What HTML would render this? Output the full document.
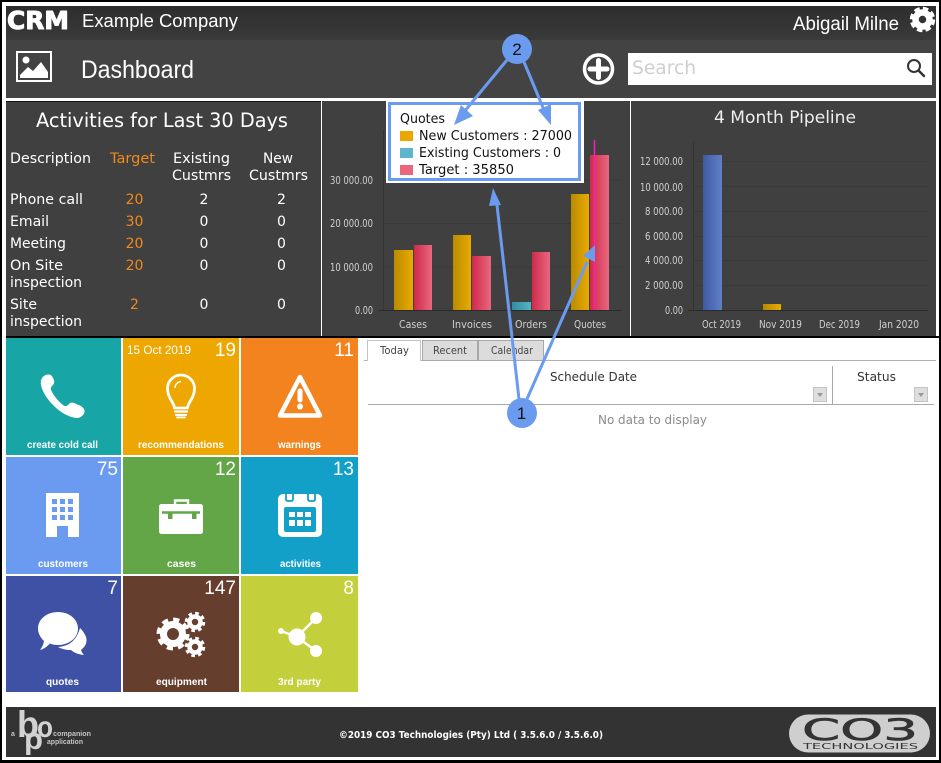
<!DOCTYPE html>
<html lang="en"><head><meta charset="utf-8"><title>Dashboard</title>
<style>
html,body{margin:0;padding:0;background:#fff;width:941px;height:763px;overflow:hidden}
svg{display:block}
.d{font-family:"DejaVu Sans",sans-serif}
.l{font-family:"Liberation Sans",sans-serif}
</style></head><body>
<svg width="941" height="763" viewBox="0 0 941 763" xmlns="http://www.w3.org/2000/svg">
<defs>
<linearGradient id="hd" x1="0" y1="0" x2="0" y2="1"><stop offset="0" stop-color="#2d2d2d"/><stop offset="1" stop-color="#3a3a3a"/></linearGradient>
<linearGradient id="go" x1="0" y1="0" x2="1" y2="0"><stop offset="0" stop-color="#b98b00"/><stop offset="1" stop-color="#e9aa00"/></linearGradient>
<linearGradient id="re" x1="0" y1="0" x2="1" y2="0"><stop offset="0" stop-color="#cf2a4c"/><stop offset="1" stop-color="#e8687e"/></linearGradient>
<linearGradient id="te" x1="0" y1="0" x2="1" y2="0"><stop offset="0" stop-color="#2f8ea2"/><stop offset="1" stop-color="#55b3c8"/></linearGradient>
<linearGradient id="bl" x1="0" y1="0" x2="1" y2="0"><stop offset="0" stop-color="#3f5aa2"/><stop offset="1" stop-color="#6080c8"/></linearGradient>
</defs>
<rect width="941" height="763" fill="#000"/>
<rect x="2" y="2" width="937" height="758" fill="#fff"/>

<!-- header -->
<rect x="6" y="6" width="930" height="34" fill="url(#hd)"/>
<rect x="6" y="40" width="930" height="58" fill="#434343"/>
<text class="d" x="7" y="29" font-size="25" font-weight="700" fill="#fff" stroke="#fff" stroke-width="1" stroke-linejoin="round" textLength="62" lengthAdjust="spacingAndGlyphs">CRM</text>
<text class="l" x="82" y="27" font-size="18" fill="#fff" textLength="156" lengthAdjust="spacingAndGlyphs">Example Company</text>
<text class="l" x="793" y="30" font-size="19" fill="#fff" textLength="106" lengthAdjust="spacingAndGlyphs">Abigail Milne</text>
<g fill="none" stroke="#fff"><circle cx="922.500" cy="19.500" r="7" stroke-width="6.500"/><circle cx="922.500" cy="19.500" r="10.500" stroke-width="4.500" stroke-dasharray="5.200 3.050"/></g>
<rect x="17" y="52" width="34" height="29" fill="none" stroke="#fff" stroke-width="2"/>
<circle cx="26" cy="60" r="3.500" fill="#fff"/>
<path d="M20 78 L20 75 L28 67 L33 71 L41 62 L48 72 L48 78Z" fill="#fff"/>
<text class="l" x="81" y="78" font-size="25" fill="#fff" textLength="113" lengthAdjust="spacingAndGlyphs">Dashboard</text>
<circle cx="598.500" cy="69" r="14" fill="none" stroke="#fff" stroke-width="3.500"/>
<path d="M590 69H607M598.500 60.500V77.500" stroke="#fff" stroke-width="5" stroke-linecap="round"/>
<rect x="628" y="53" width="304" height="32" fill="#fff"/>
<text class="d" x="632" y="74" font-size="19" fill="#cfcfcf" textLength="64" lengthAdjust="spacingAndGlyphs">Search</text>
<circle cx="914" cy="66" r="6" fill="none" stroke="#333" stroke-width="2"/>
<path d="M918.500 70.500L924 76" stroke="#333" stroke-width="2.500" stroke-linecap="round"/>

<!-- panels -->
<rect x="2" y="98" width="937" height="3" fill="#fff"/>
<rect x="6" y="101" width="315" height="235" fill="#404040"/>
<rect x="6" y="101" width="315" height="1" fill="#111"/>
<rect x="322" y="101" width="308" height="235" fill="#404040"/>
<rect x="631" y="101" width="305" height="235" fill="#404040"/>
<rect x="6" y="336" width="933" height="2" fill="#000"/>
<rect x="936" y="336" width="5" height="2" fill="#000"/>

<!-- activities table -->
<g class="d" fill="#fff" font-size="14">
<text x="36" y="127" font-size="19.500" textLength="252" lengthAdjust="spacingAndGlyphs">Activities for Last 30 Days</text>
<text x="10" y="163" textLength="81" lengthAdjust="spacingAndGlyphs">Description</text>
<text x="110" y="163" fill="#f08a1c" textLength="45" lengthAdjust="spacingAndGlyphs">Target</text>
<text x="173" y="163" textLength="57" lengthAdjust="spacingAndGlyphs">Existing</text>
<text x="172" y="180" textLength="59" lengthAdjust="spacingAndGlyphs">Custmrs</text>
<text x="263" y="163" textLength="30" lengthAdjust="spacingAndGlyphs">New</text>
<text x="249" y="180" textLength="59" lengthAdjust="spacingAndGlyphs">Custmrs</text>
<text x="10" y="204" textLength="73" lengthAdjust="spacingAndGlyphs">Phone call</text>
<text x="10" y="226" textLength="39" lengthAdjust="spacingAndGlyphs">Email</text>
<text x="10" y="248" textLength="56" lengthAdjust="spacingAndGlyphs">Meeting</text>
<text x="10" y="270" textLength="53" lengthAdjust="spacingAndGlyphs">On Site</text>
<text x="10" y="287" textLength="72" lengthAdjust="spacingAndGlyphs">inspection</text>
<text x="10" y="309" textLength="27" lengthAdjust="spacingAndGlyphs">Site</text>
<text x="10" y="326" textLength="72" lengthAdjust="spacingAndGlyphs">inspection</text>
<g fill="#f08a1c" text-anchor="middle"><text x="134.500" y="204">20</text><text x="134.500" y="226">30</text><text x="134.500" y="248">20</text><text x="134.500" y="270">20</text><text x="134.500" y="309">2</text></g>
<g text-anchor="middle"><text x="204" y="204">2</text><text x="204" y="226">0</text><text x="204" y="248">0</text><text x="204" y="270">0</text><text x="204" y="309">0</text>
<text x="281.500" y="204">2</text><text x="281.500" y="226">0</text><text x="281.500" y="248">0</text><text x="281.500" y="270">0</text><text x="281.500" y="309">0</text></g>
</g>

<!-- chart 1 -->
<g stroke="#3a3a3a" stroke-width="1"><path d="M384 180H622M384 223.500H622M384 267H622"/></g>
<path d="M383.500 130V310" stroke="#333"/>
<path d="M378 310.500H622" stroke="#2a2a2a"/>
<rect x="394" y="250" width="19" height="60" fill="url(#go)"/>
<rect x="414" y="245" width="18" height="65" fill="url(#re)"/>
<rect x="453" y="235" width="18" height="75" fill="url(#go)"/>
<rect x="472" y="256" width="19" height="54" fill="url(#re)"/>
<rect x="512" y="302" width="19" height="8" fill="url(#te)"/>
<rect x="532" y="252" width="18" height="58" fill="url(#re)"/>
<rect x="571" y="194" width="18" height="116" fill="url(#go)"/>
<rect x="590" y="155" width="19" height="155" fill="url(#re)"/>
<path d="M594.500 140V310" stroke="#ff1fb4" stroke-width="1.500"/>
<g class="d" font-size="11" fill="#d0d0d0">
<text x="330" y="184" textLength="43" lengthAdjust="spacingAndGlyphs">30 000.00</text>
<text x="330" y="227" textLength="43" lengthAdjust="spacingAndGlyphs">20 000.00</text>
<text x="330" y="271" textLength="43" lengthAdjust="spacingAndGlyphs">10 000.00</text>
<text x="355" y="314" textLength="18" lengthAdjust="spacingAndGlyphs">0.00</text>
<text x="399" y="328" textLength="28" lengthAdjust="spacingAndGlyphs">Cases</text>
<text x="452" y="328" textLength="40" lengthAdjust="spacingAndGlyphs">Invoices</text>
<text x="515" y="328" textLength="32" lengthAdjust="spacingAndGlyphs">Orders</text>
<text x="574" y="328" textLength="32" lengthAdjust="spacingAndGlyphs">Quotes</text>
</g>

<!-- chart 2 -->
<text class="d" x="714" y="123" font-size="16.500" fill="#eee" textLength="142" lengthAdjust="spacingAndGlyphs">4 Month Pipeline</text>
<g stroke="#3a3a3a"><path d="M693 161.500H928M693 186.500H928M693 211.500H928M693 236.500H928M693 260.500H928M693 285.500H928"/></g>
<path d="M693.500 142V310" stroke="#333"/>
<path d="M688 310.500H928" stroke="#2a2a2a"/>
<rect x="703" y="155" width="19" height="155" fill="url(#bl)"/>
<rect x="763" y="304" width="18" height="6" fill="url(#go)"/>
<g class="d" font-size="11" fill="#d0d0d0">
<text x="640" y="165" textLength="43" lengthAdjust="spacingAndGlyphs">12 000.00</text>
<text x="640" y="191" textLength="43" lengthAdjust="spacingAndGlyphs">10 000.00</text>
<text x="645" y="215" textLength="38" lengthAdjust="spacingAndGlyphs">8 000.00</text>
<text x="645" y="240" textLength="38" lengthAdjust="spacingAndGlyphs">6 000.00</text>
<text x="645" y="264" textLength="38" lengthAdjust="spacingAndGlyphs">4 000.00</text>
<text x="645" y="289" textLength="38" lengthAdjust="spacingAndGlyphs">2 000.00</text>
<text x="665" y="314" textLength="18" lengthAdjust="spacingAndGlyphs">0.00</text>
<text x="702" y="328" textLength="39" lengthAdjust="spacingAndGlyphs">Oct 2019</text>
<text x="759" y="328" textLength="43" lengthAdjust="spacingAndGlyphs">Nov 2019</text>
<text x="819" y="328" textLength="41" lengthAdjust="spacingAndGlyphs">Dec 2019</text>
<text x="879" y="328" textLength="40" lengthAdjust="spacingAndGlyphs">Jan 2020</text>
</g>

<!-- tiles -->
<rect x="6" y="338" width="115" height="117" fill="#17a5a5"/>
<rect x="123" y="338" width="116" height="117" fill="#eea700"/>
<rect x="241" y="338" width="117" height="117" fill="#f2831f"/>
<rect x="6" y="457" width="115" height="117" fill="#6a9bf0"/>
<rect x="123" y="457" width="116" height="117" fill="#62a648"/>
<rect x="241" y="457" width="117" height="117" fill="#12a0c8"/>
<rect x="6" y="576" width="115" height="116" fill="#3f51a5"/>
<rect x="123" y="576" width="116" height="116" fill="#653e2d"/>
<rect x="241" y="576" width="117" height="116" fill="#c4d03b"/>
<g class="l" fill="#fff">
<g font-size="19" text-anchor="end"><text x="236" y="356">19</text><text x="354" y="356">11</text><text x="118" y="475">75</text><text x="236" y="475">12</text><text x="354" y="475">13</text><text x="118" y="594">7</text><text x="236" y="594">147</text><text x="354" y="594">8</text></g>
<text x="127" y="354" font-size="12" textLength="64" lengthAdjust="spacingAndGlyphs">15 Oct 2019</text>
<g font-size="10.500" font-weight="700">
<text x="27" y="448" textLength="71" lengthAdjust="spacingAndGlyphs">create cold call</text>
<text x="138" y="448" textLength="86" lengthAdjust="spacingAndGlyphs">recommendations</text>
<text x="278" y="448" textLength="43" lengthAdjust="spacingAndGlyphs">warnings</text>
<text x="38" y="567" textLength="50" lengthAdjust="spacingAndGlyphs">customers</text>
<text x="167" y="567" textLength="29" lengthAdjust="spacingAndGlyphs">cases</text>
<text x="280" y="567" textLength="41" lengthAdjust="spacingAndGlyphs">activities</text>
<text x="46" y="685" textLength="33" lengthAdjust="spacingAndGlyphs">quotes</text>
<text x="156" y="685" textLength="51" lengthAdjust="spacingAndGlyphs">equipment</text>
<text x="278" y="685" textLength="43" lengthAdjust="spacingAndGlyphs">3rd party</text>
</g></g>

<!-- phone -->
<path d="M48 374.500C43 375 40 379 41 385C43 397 60 416 76 418C81 418.500 85 414 84.500 411C84.500 409 83 407.500 81 406L74 403C71.500 402 69.500 403 68 405C66.500 406.500 65 406.500 63 405C58 401 54 396 51 390C50.500 388 51 387 52.500 385.500C54 384 54.500 382 54 380L52 376C51 374.800 49.500 374.300 48 374.500Z" fill="#fff"/>
<!-- bulb -->
<path d="M174.500 408C174 402 167.500 398 167.500 388.500A13.500 13.500 0 0 1 194.500 388.500C194.500 398 188 402 187.500 408Z" fill="none" stroke="#fff" stroke-width="2.800" stroke-linejoin="round"/>
<path d="M175 411.500H187M176 415H186" stroke="#fff" stroke-width="2.200" stroke-linecap="round"/>
<path d="M177 417.500H185" stroke="#fff" stroke-width="1.800" stroke-linecap="round"/>
<path d="M175 388A6.500 6.500 0 0 1 181 381.500" fill="none" stroke="#fff" stroke-width="1.400"/>
<!-- warning -->
<path d="M300 377L320 415.500H280Z" fill="none" stroke="#fff" stroke-width="4.500" stroke-linejoin="round"/>
<path d="M300 391V400" stroke="#fff" stroke-width="5" stroke-linecap="round"/>
<circle cx="300" cy="406.500" r="3" fill="#fff"/>
<!-- building -->
<path d="M46 493H79V537H68V526H57V537H46Z" fill="#fff"/>
<g fill="#6a9bf0"><rect x="52" y="499" width="5" height="5"/><rect x="60" y="499" width="5" height="5"/><rect x="68" y="499" width="5" height="5"/><rect x="52" y="507" width="5" height="5"/><rect x="60" y="507" width="5" height="5"/><rect x="68" y="507" width="5" height="5"/><rect x="52" y="515" width="5" height="5"/><rect x="60" y="515" width="5" height="5"/><rect x="68" y="515" width="5" height="5"/></g>
<!-- briefcase -->
<rect x="159" y="504" width="44" height="30" rx="2.500" fill="#fff"/>
<path d="M175 504V500.500H188V504" fill="none" stroke="#fff" stroke-width="2.500"/>
<path d="M162 512.500H200" stroke="#62a648" stroke-width="2.500"/>
<path d="M168 513H172.500V519H168ZM192 513H196.500V519H192Z" fill="#62a648"/>
<!-- calendar -->
<rect x="278" y="494" width="44" height="43" rx="5" fill="#fff"/>
<rect x="284" y="507" width="32" height="25" rx="2" fill="#12a0c8"/>
<g fill="none" stroke="#12a0c8" stroke-width="1.800"><path d="M286 493V499Q286 501 288 501H291Q293 501 293 499V493"/><path d="M308 493V499Q308 501 310 501H313Q315 501 315 499V493"/></g>
<g fill="#fff"><rect x="289" y="512" width="6" height="5"/><rect x="297" y="512" width="6" height="5"/><rect x="305" y="512" width="6" height="5"/><rect x="289" y="520" width="6" height="6"/><rect x="297" y="520" width="6" height="6"/><rect x="305" y="520" width="6" height="6"/></g>
<!-- bubbles -->
<path d="M80 628C84 632 87 637 86.500 641C86 646 83 648 81 650C81.500 652 83 654 84 655C78 654.500 73 652 71 650C66 650 62 649 58 647C68 646 76 642 80 628Z" fill="#fff"/>
<path d="M58 612C69 612 78 619 78 628.500C78 638 69 645 58 645C55 645 52 644.500 50 643.500C47 646.500 44 649 40 650C42 647.500 43.500 644.500 44 641C41 638 38 634 38 628.500C38 619 47 612 58 612Z" fill="#fff"/>
<!-- gears -->
<g fill="none" stroke="#fff">
<circle cx="173" cy="634" r="9.500" stroke-width="7"/><circle cx="173" cy="634" r="14" stroke-width="5" stroke-dasharray="6 5"/>
<circle cx="195" cy="622" r="5.500" stroke-width="4.500"/><circle cx="195" cy="622" r="8.500" stroke-width="3.500" stroke-dasharray="3.500 3.170"/>
<circle cx="195" cy="647" r="5.500" stroke-width="4.500"/><circle cx="195" cy="647" r="8.500" stroke-width="3.500" stroke-dasharray="3.500 3.170"/>
</g>
<!-- share -->
<path d="M316 618L297 637L316 651M297 637L281 631" stroke="#fff" stroke-width="2.500" fill="none"/>
<circle cx="316" cy="618" r="6" fill="#fff"/><circle cx="316" cy="651" r="6" fill="#fff"/><circle cx="297" cy="637" r="8.500" fill="#fff"/><circle cx="281" cy="631" r="3" fill="#fff"/>

<!-- tabs/grid -->
<path d="M364 360.500H936" stroke="#b0b0b0"/>
<path d="M367.500 361V340.500H420.500V361" fill="#fff" stroke="#c4c4c4"/>
<rect x="368" y="360" width="52" height="2" fill="#fff"/>
<rect x="422.500" y="340.500" width="55" height="20" fill="#dcdcdc" stroke="#a8a8a8"/>
<rect x="478.500" y="340.500" width="65" height="20" fill="#dcdcdc" stroke="#a8a8a8"/>
<g class="d" font-size="10.500" fill="#444"><text x="380" y="354" textLength="29" lengthAdjust="spacingAndGlyphs">Today</text><text x="433" y="354" textLength="34" lengthAdjust="spacingAndGlyphs">Recent</text><text x="491" y="354" textLength="42" lengthAdjust="spacingAndGlyphs">Calendar</text></g>
<g class="d" font-size="12.500" fill="#333"><text x="550" y="381" textLength="87" lengthAdjust="spacingAndGlyphs">Schedule Date</text><text x="857" y="381" textLength="39" lengthAdjust="spacingAndGlyphs">Status</text></g>
<path d="M368 404.500H934" stroke="#a8a8a8"/>
<path d="M832.500 366V404" stroke="#a8a8a8"/>
<rect x="813.500" y="387.500" width="13" height="14" fill="#dedede" stroke="#c4c4c4"/>
<path d="M817 393L820 397L823 393Z" fill="#999"/>
<rect x="914.500" y="387.500" width="13" height="14" fill="#dedede" stroke="#c4c4c4"/>
<path d="M918 393L921 397L924 393Z" fill="#999"/>
<text class="d" x="598" y="424" font-size="12" fill="#8a8a8a" textLength="109" lengthAdjust="spacingAndGlyphs">No data to display</text>

<!-- footer -->
<rect x="6" y="707" width="930" height="50" fill="#333"/>
<g class="l" fill="#c4c4c4">
<text x="11" y="736" font-size="7" font-weight="700">a</text>
<g font-weight="700" fill="#d2d2d2">
<text x="17" y="737" font-size="37" textLength="22" lengthAdjust="spacingAndGlyphs">b</text>
<text x="37" y="737" font-size="30" textLength="16" lengthAdjust="spacingAndGlyphs">o</text>
<text x="24" y="749" font-size="30" textLength="19" lengthAdjust="spacingAndGlyphs">p</text>
</g>
<text x="53" y="736" font-size="7" font-weight="700" textLength="38" lengthAdjust="spacingAndGlyphs">companion</text>
<text x="47" y="744" font-size="7" font-weight="700" textLength="36" lengthAdjust="spacingAndGlyphs">application</text>
</g>
<text class="d" x="339" y="738" font-size="10" font-weight="700" fill="#fff" textLength="264" lengthAdjust="spacingAndGlyphs">©2019 CO3 Technologies (Pty) Ltd ( 3.5.6.0 / 3.5.6.0)</text>
<rect x="789" y="714.500" width="141" height="38" rx="19" fill="#cfcfcf"/>
<text class="d" x="802" y="740" font-size="29" fill="#333" stroke="#333" stroke-width=".6" textLength="116" lengthAdjust="spacingAndGlyphs">CO3</text>
<text class="d" x="803" y="749" font-size="7.500" fill="#333" textLength="115" lengthAdjust="spacingAndGlyphs">TECHNOLOGIES</text>

<!-- tooltip -->
<rect x="386" y="99" width="198" height="84" fill="#fff"/>
<rect x="389.500" y="103.500" width="190" height="76" fill="#fff" stroke="#6a9bef" stroke-width="3"/>
<g class="d" font-size="13.500" fill="#111">
<text x="400" y="123" textLength="45" lengthAdjust="spacingAndGlyphs">Quotes</text>
<text x="419" y="140" textLength="153" lengthAdjust="spacingAndGlyphs">New Customers : 27000</text>
<text x="419" y="157" textLength="142" lengthAdjust="spacingAndGlyphs">Existing Customers : 0</text>
<text x="419" y="174" textLength="95" lengthAdjust="spacingAndGlyphs">Target : 35850</text>
</g>
<rect x="400" y="131" width="13" height="10" fill="#eba700"/>
<rect x="400" y="148" width="13" height="10" fill="#5fb6cc"/>
<rect x="400" y="165" width="13" height="10" fill="#e8667e"/>

<!-- annotations -->
<g stroke="#6a9bef" stroke-width="3" fill="none">
<path d="M507 60L464 112M524 62L544 110"/>
<path d="M519 399L497 205M527 399L587 262"/>
</g>
<g fill="#6a9bef">
<path d="M454 125L461 105L473 116Z"/>
<path d="M551 125L538 110L551 104Z"/>
<path d="M493 188L501 205L489 206Z"/>
<path d="M595 245L595 262L583 256Z"/>
<circle cx="517" cy="49" r="15"/>
<circle cx="522" cy="413" r="15"/>
</g>
<g class="l" font-size="17" fill="#111" text-anchor="middle"><text x="517" y="55">2</text><text x="521.500" y="419">1</text></g>
</svg>
</body></html>
